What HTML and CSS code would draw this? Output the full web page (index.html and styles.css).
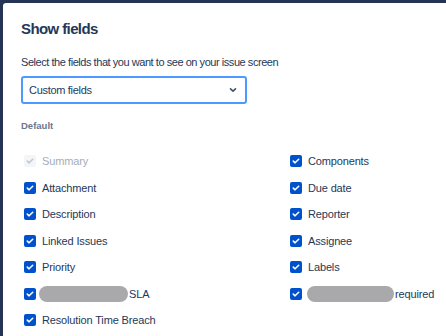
FILE: index.html
```html
<!DOCTYPE html>
<html>
<head>
<meta charset="utf-8">
<link rel="stylesheet" href="styles.css">
</head>
<body>
<div class="modal">
  <h1 class="title">Show fields</h1>
  <p class="subtitle">Select the fields that you want to see on your issue screen</p>
  <div class="select">
    <span>Custom fields</span>
    <svg class="chev" width="10" height="10" viewBox="0 0 10 10"><path d="M2.5 3.8 L5 6.2 L7.5 3.8" fill="none" stroke="#42526e" stroke-width="1.6" stroke-linecap="round" stroke-linejoin="round"/></svg>
  </div>
  <div class="section">Default</div>
  <div class="fields">
    <div class="col col-left">
      <div class="row disabled"><span class="cb"><svg viewBox="0 0 12 12"><path d="M3.3 6.1 L5.1 7.8 L8.7 4.3" fill="none" stroke-width="1.6" stroke-linecap="round" stroke-linejoin="round"/></svg></span><span>Summary</span></div>
      <div class="row"><span class="cb"><svg viewBox="0 0 12 12"><path d="M3.3 6.1 L5.1 7.8 L8.7 4.3" fill="none" stroke-width="1.6" stroke-linecap="round" stroke-linejoin="round"/></svg></span><span>Attachment</span></div>
      <div class="row"><span class="cb"><svg viewBox="0 0 12 12"><path d="M3.3 6.1 L5.1 7.8 L8.7 4.3" fill="none" stroke-width="1.6" stroke-linecap="round" stroke-linejoin="round"/></svg></span><span>Description</span></div>
      <div class="row"><span class="cb"><svg viewBox="0 0 12 12"><path d="M3.3 6.1 L5.1 7.8 L8.7 4.3" fill="none" stroke-width="1.6" stroke-linecap="round" stroke-linejoin="round"/></svg></span><span>Linked Issues</span></div>
      <div class="row"><span class="cb"><svg viewBox="0 0 12 12"><path d="M3.3 6.1 L5.1 7.8 L8.7 4.3" fill="none" stroke-width="1.6" stroke-linecap="round" stroke-linejoin="round"/></svg></span><span>Priority</span></div>
      <div class="row"><span class="cb"><svg viewBox="0 0 12 12"><path d="M3.3 6.1 L5.1 7.8 L8.7 4.3" fill="none" stroke-width="1.6" stroke-linecap="round" stroke-linejoin="round"/></svg></span><span class="blur blur-left"></span><span class="tight">SLA</span></div>
      <div class="row"><span class="cb"><svg viewBox="0 0 12 12"><path d="M3.3 6.1 L5.1 7.8 L8.7 4.3" fill="none" stroke-width="1.6" stroke-linecap="round" stroke-linejoin="round"/></svg></span><span>Resolution Time Breach</span></div>
    </div>
    <div class="col col-right">
      <div class="row"><span class="cb"><svg viewBox="0 0 12 12"><path d="M3.3 6.1 L5.1 7.8 L8.7 4.3" fill="none" stroke-width="1.6" stroke-linecap="round" stroke-linejoin="round"/></svg></span><span>Components</span></div>
      <div class="row"><span class="cb"><svg viewBox="0 0 12 12"><path d="M3.3 6.1 L5.1 7.8 L8.7 4.3" fill="none" stroke-width="1.6" stroke-linecap="round" stroke-linejoin="round"/></svg></span><span>Due date</span></div>
      <div class="row"><span class="cb"><svg viewBox="0 0 12 12"><path d="M3.3 6.1 L5.1 7.8 L8.7 4.3" fill="none" stroke-width="1.6" stroke-linecap="round" stroke-linejoin="round"/></svg></span><span>Reporter</span></div>
      <div class="row"><span class="cb"><svg viewBox="0 0 12 12"><path d="M3.3 6.1 L5.1 7.8 L8.7 4.3" fill="none" stroke-width="1.6" stroke-linecap="round" stroke-linejoin="round"/></svg></span><span>Assignee</span></div>
      <div class="row"><span class="cb"><svg viewBox="0 0 12 12"><path d="M3.3 6.1 L5.1 7.8 L8.7 4.3" fill="none" stroke-width="1.6" stroke-linecap="round" stroke-linejoin="round"/></svg></span><span>Labels</span></div>
      <div class="row"><span class="cb"><svg viewBox="0 0 12 12"><path d="M3.3 6.1 L5.1 7.8 L8.7 4.3" fill="none" stroke-width="1.6" stroke-linecap="round" stroke-linejoin="round"/></svg></span><span class="blur blur-right"></span><span class="tight">required</span></div>
    </div>
  </div>
</div>
</body>
</html>
```
FILE: styles.css
```css
* { box-sizing: border-box; }
html, body {
  margin: 0;
  padding: 0;
  width: 446px;
  height: 336px;
  overflow: hidden;
  background: #253455;
}
body {
  font-family: "Liberation Sans", Arial, sans-serif;
  color: #172b4d;
  padding: 3px 0 0 3px;
}
.modal {
  background: #ffffff;
  border-radius: 3px 0 0 0;
  height: 340px;
  padding: 16px 0 0 18px;
}
.title {
  margin: 0;
  font-size: 15px;
  line-height: 20px;
  font-weight: 700;
  letter-spacing: -0.6px;
  color: #253858;
}
.subtitle {
  margin: 15px 0 0 0;
  font-size: 11px;
  line-height: 16px;
  letter-spacing: -0.45px;
  color: #253858;
}
.select {
  margin-top: 6px;
  width: 226px;
  height: 28px;
  border: 2px solid #4c9aff;
  border-radius: 3px;
  display: flex;
  align-items: center;
  justify-content: space-between;
  padding: 0 7px 0 6px;
  font-size: 11px;
  letter-spacing: -0.3px;
  color: #253858;
  background: #fff;
}
.chev { display: block; }
.section {
  margin-top: 15px;
  font-size: 9.5px;
  line-height: 14px;
  font-weight: 700;
  color: #6b778c;
}
.fields {
  margin-top: 14.75px;
  display: flex;
}
.col { display: flex; flex-direction: column; }
.col-left { width: 266px; }
.row {
  height: 26.5px;
  display: flex;
  align-items: center;
  font-size: 11px;
  letter-spacing: -0.15px;
  color: #253858;
  padding-left: 3px;
}
.cb {
  width: 12px;
  height: 12px;
  border-radius: 2px;
  background: #0052cc;
  margin-right: 6px;
  flex: none;
  display: block;
}
.cb svg { display: block; width: 12px; height: 12px; }
.cb path { stroke: #ffffff; }
.disabled { color: #a5adba; }
.disabled .cb { background: #f4f5f7; }
.disabled .cb path { stroke: #c1c7d0; }
.blur {
  display: block;
  height: 16px;
  border-radius: 8px;
  background: #a9a9ab;
  filter: blur(0.6px);
  margin-left: -3px;
}
.blur-left { width: 89px; }
.blur-right { width: 87px; margin-left: -1px; }
.tight { margin-left: 1px; }
```
